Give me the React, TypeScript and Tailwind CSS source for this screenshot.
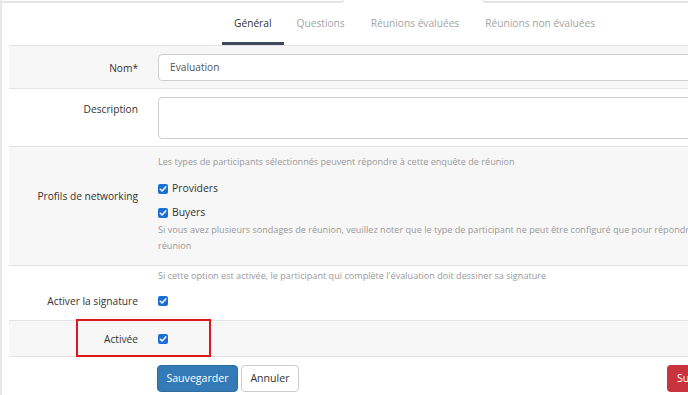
import React from "react";

function Check() {
  return (
    <span className="inline-flex w-[10px] h-[10px] rounded-[2px] bg-[#1b6fd4] items-center justify-center shrink-0">
      <svg width="8" height="8" viewBox="0 0 8 8">
        <path d="M1.3 4.2 L3.1 6 L6.8 1.9" stroke="#fff" strokeWidth="1.5" fill="none" strokeLinecap="round" strokeLinejoin="round" />
      </svg>
    </span>
  );
}

function Label({ children, className = "" }: { children: React.ReactNode; className?: string }) {
  return (
    <div className={"w-[149px] shrink-0 pr-[20px] text-right text-[10.2px] text-[#333] leading-[16px] " + className}>
      {children}
    </div>
  );
}

export default function App() {
  return (
    <div className="w-[688px] h-[395px] overflow-hidden bg-white relative" style={{ fontFamily: '"Open Sans", "Noto Sans", sans-serif' }}>
      <div className="w-[760px] border-l-2 border-[#e8e8e8] h-full">
        {/* top strip */}
        <div className="flex h-[3px]">
          <div className="w-[342px] border-b-2 border-r border-[#e4e4e4] rounded-br-[3px]" />
          <div className="w-[139px]" />
          <div className="flex-1 border-b-2 border-l border-[#e4e4e4] rounded-bl-[3px]" />
        </div>
        <div className="pl-[7px]">
          {/* tabs */}
          <div className="flex h-[42px] pl-[213px] text-[10.2px]">
            <div className="px-[12px] flex items-center text-[#333] border-b-[3px] border-[#3e4a5c] pt-[3px]">Général</div>
            <div className="px-[13px] flex items-center text-[#a3a3a3]">Questions</div>
            <div className="px-[13px] flex items-center text-[#a3a3a3]">Réunions évaluées</div>
            <div className="px-[13px] flex items-center text-[#a3a3a3]">Réunions non évaluées</div>
          </div>
          {/* Nom */}
          <div className="flex border-t border-[#e3e3e3] bg-[#f7f7f7] pt-[8px] pb-[7px] items-center">
            <Label>Nom*</Label>
            <div className="flex-1 h-[27px] bg-white border border-[#cfcfcf] rounded-[4px] px-[11px] flex items-center text-[10.2px] text-[#555]">Evaluation</div>
          </div>
          {/* Description */}
          <div className="flex border-t border-[#e3e3e3] bg-white pt-[8px] pb-[7px]">
            <Label className="pt-[4px]">Description</Label>
            <div className="flex-1 h-[42px] bg-white border border-[#cfcfcf] rounded-[4px]" />
          </div>
          {/* Profils */}
          <div className="flex border-t border-[#e3e3e3] bg-[#f7f7f7] pt-[7px] pb-[11px]">
            <Label className="pt-[34px]">Profils de networking</Label>
            <div className="flex-1 flex flex-col">
              <div className="text-[9.1px] leading-[16px] text-[#999]">Les types de participants sélectionnés peuvent répondre à cette enquête de réunion</div>
              <div className="mt-[11px] flex items-center gap-[4px] h-[16px] text-[10.4px] text-[#333]"><Check />Providers</div>
              <div className="mt-[8px] flex items-center gap-[4px] h-[16px] text-[10.4px] text-[#333]"><Check />Buyers</div>
              <div className="mt-[1px] text-[9.1px] leading-[16px] text-[#999] whitespace-nowrap">Si vous avez plusieurs sondages de réunion, veuillez noter que le type de participant ne peut être configuré que pour répondre à une seule enquête de</div>
              <div className="text-[9.1px] leading-[16px] text-[#999]">réunion</div>
            </div>
          </div>
          {/* Signature */}
          <div className="flex border-t border-[#e3e3e3] bg-white pt-[2px] pb-[11px]">
            <Label className="pt-[25px]">Activer la signature</Label>
            <div className="flex-1 flex flex-col">
              <div className="text-[9.1px] leading-[16px] text-[#999]">Si cette option est activée, le participant qui complète l'évaluation doit dessiner sa signature</div>
              <div className="mt-[9px] h-[16px] flex items-center"><Check /></div>
            </div>
          </div>
          {/* Activée */}
          <div className="flex border-t border-[#e3e3e3] bg-[#f7f7f7] h-[36px] items-center">
            <Label>Activée</Label>
            <Check />
          </div>
          {/* Buttons */}
          <div className="flex border-t border-[#e3e3e3] bg-white pt-[8px]">
            <div className="w-[148px] shrink-0" />
            <button className="h-[27px] w-[81px] rounded-[4px] bg-[#337ab7] border border-[#2e6da4] text-white text-[10.6px]">Sauvegarder</button>
            <button className="ml-[3px] h-[27px] w-[58px] rounded-[4px] bg-white border border-[#cccccc] text-[#333] text-[10.6px]">Annuler</button>
            <div className="w-[368px] shrink-0" />
            <button className="h-[27px] w-[70px] rounded-[4px] bg-[#c9333d] text-white text-[10.6px] text-left pl-[10px]">Supprimer</button>
          </div>
        </div>
      </div>
      <div className="absolute left-[76px] top-[319px] w-[135px] h-[38px] border-2 border-[#e0161e]" />
    </div>
  );
}
